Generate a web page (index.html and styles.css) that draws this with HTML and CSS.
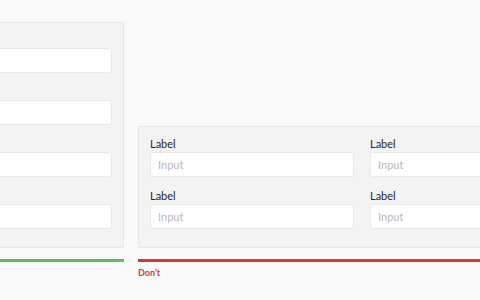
FILE: index.html
```html
<!DOCTYPE html>
<html>
<head>
    <title>Form layout</title>
    <link rel="stylesheet" href="styles.css">
</head>
<body>
    <div class="compare">
        <div class="column column-do">
            <div class="card card-do">
                <input type="text" class="field" placeholder="">
                <input type="text" class="field" placeholder="">
                <input type="text" class="field" placeholder="">
                <input type="text" class="field" placeholder="">
            </div>
            <div class="rule rule-do"></div>
            <div class="caption caption-do"></div>
        </div>
        <div class="column column-dont">
            <div class="card card-dont">
                <div class="group">
                    <label>Label</label>
                    <input type="text" class="field" placeholder="Input">
                </div>
                <div class="group">
                    <label>Label</label>
                    <input type="text" class="field" placeholder="Input">
                </div>
                <div class="group">
                    <label>Label</label>
                    <input type="text" class="field" placeholder="Input">
                </div>
                <div class="group">
                    <label>Label</label>
                    <input type="text" class="field" placeholder="Input">
                </div>
            </div>
            <div class="rule rule-dont"></div>
            <div class="caption caption-dont">Don't</div>
        </div>
    </div>
</body>
</html>
```

FILE: styles.css
```css
body {
    font-family: Lato, "Open Sans", Arial, sans-serif;
    margin: 0;
    padding: 0;
    background-color: #fafafa;
    overflow: hidden;
}

.compare {
    display: flex;
    align-items: flex-end;
    gap: 14px;
    margin-left: -30px;
    padding-top: 22px;
}

.column {
    flex-shrink: 0;
    display: flex;
    flex-direction: column;
}

.column-do {
    width: 154px;
}

.column-dont {
    width: 460px;
}

.card {
    box-sizing: border-box;
    background-color: #f3f3f3;
    border: 1px solid #e6e6e6;
}

.card-do {
    display: flex;
    flex-direction: column;
    gap: 27px;
    padding: 25px 11px 18px 11px;
}

.card-dont {
    display: grid;
    grid-template-columns: 204px 204px;
    column-gap: 16px;
    row-gap: 12px;
    padding: 10px 11px 18px 11px;
}

.group label {
    display: block;
    font-size: 11px;
    line-height: 13px;
    color: #262626;
    margin-bottom: 2px;
}

.field {
    box-sizing: border-box;
    width: 100%;
    height: 25px;
    margin: 0;
    padding: 0 7px;
    background-color: #ffffff;
    border: 1px solid #e8e8e8;
    border-radius: 3px;
    font-family: Lato, Arial, sans-serif;
    font-size: 11px;
    outline: none;
}

.field::placeholder {
    color: #b9b9b9;
}

.rule {
    height: 3px;
    margin-top: 11px;
}

.rule-do {
    background-color: #5cbf62;
}

.rule-dont {
    background-color: #d9383a;
}

.caption {
    height: 11px;
    margin-top: 5px;
    font-size: 9px;
    line-height: 11px;
    font-weight: bold;
}

.caption-do {
    color: #4caf50;
}

.caption-dont {
    color: #d03a3c;
}
```
